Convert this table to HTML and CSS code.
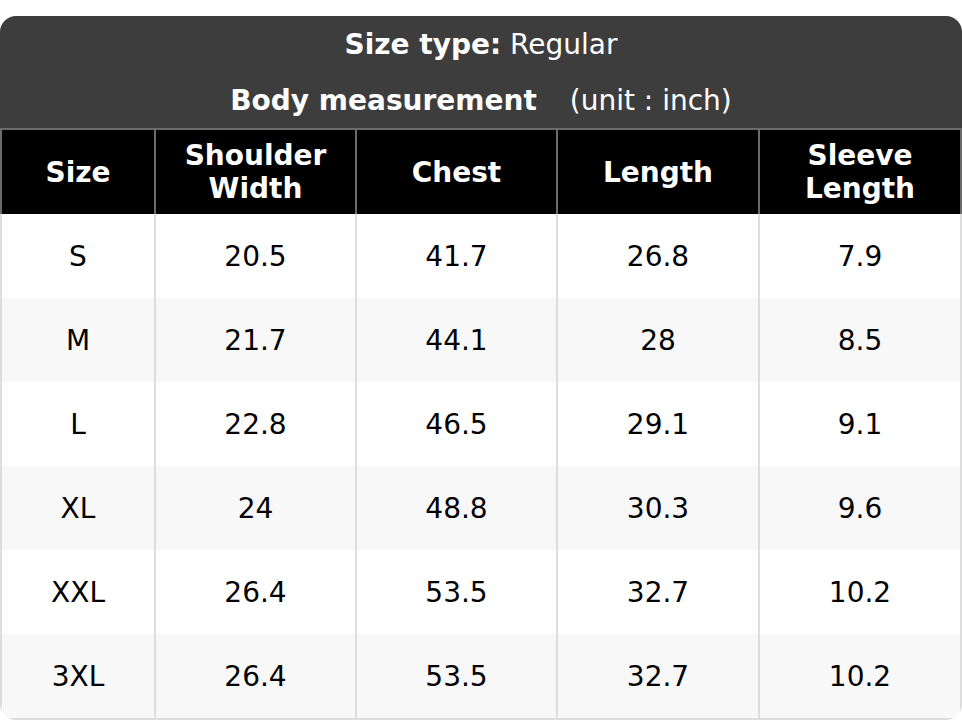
FILE: index.html
```html
<!DOCTYPE html>
<html>
<head>
<meta charset="utf-8">
<link rel="stylesheet" href="styles.css">
</head>
<body>
<div class="chart">
  <div class="title">
    <div class="title-line"><b>Size type:</b>&nbsp;Regular</div>
    <div class="title-line"><b>Body measurement</b><span class="unit">(unit : inch)</span></div>
  </div>
  <div class="grid">
    <div class="hcell">Size</div>
    <div class="hcell">Shoulder<br>Width</div>
    <div class="hcell">Chest</div>
    <div class="hcell">Length</div>
    <div class="hcell last">Sleeve<br>Length</div>

    <div class="cell">S</div><div class="cell">20.5</div><div class="cell">41.7</div><div class="cell">26.8</div><div class="cell last">7.9</div>
    <div class="cell alt">M</div><div class="cell alt">21.7</div><div class="cell alt">44.1</div><div class="cell alt">28</div><div class="cell alt last">8.5</div>
    <div class="cell">L</div><div class="cell">22.8</div><div class="cell">46.5</div><div class="cell">29.1</div><div class="cell last">9.1</div>
    <div class="cell alt">XL</div><div class="cell alt">24</div><div class="cell alt">48.8</div><div class="cell alt">30.3</div><div class="cell alt last">9.6</div>
    <div class="cell">XXL</div><div class="cell">26.4</div><div class="cell">53.5</div><div class="cell">32.7</div><div class="cell last">10.2</div>
    <div class="cell alt bottom">3XL</div><div class="cell alt bottom">26.4</div><div class="cell alt bottom">53.5</div><div class="cell alt bottom">32.7</div><div class="cell alt bottom last">10.2</div>
  </div>
</div>
</body>
</html>
```
FILE: styles.css
```css
html, body {
  margin: 0;
  padding: 0;
  background: #ffffff;
}
body {
  padding-top: 16px;
}
.chart {
  width: 962px;
  border-radius: 16px;
  overflow: hidden;
  font-family: "DejaVu Sans", sans-serif;
  font-size: 28px;
}
.title {
  background: #3d3d3d;
  color: #ffffff;
}
.title-line {
  height: 56px;
  display: flex;
  align-items: center;
  justify-content: center;
  white-space: pre;
}
.unit {
  margin-left: 33px;
}
.grid {
  display: grid;
  grid-template-columns: 154px 201px 201px 202px 204px;
}
.hcell {
  box-sizing: border-box;
  height: 86px;
  background: #000000;
  color: #ffffff;
  font-weight: bold;
  border-top: 2px solid #6b6b6b;
  border-left: 2px solid #6b6b6b;
  display: flex;
  align-items: center;
  justify-content: center;
  text-align: center;
  line-height: 33px;
}
.hcell.last {
  border-right: 2px solid #6b6b6b;
}
.cell {
  box-sizing: border-box;
  height: 84px;
  background: #ffffff;
  color: #000000;
  border-left: 2px solid #dddddd;
  display: flex;
  align-items: center;
  justify-content: center;
}
.cell.alt {
  background: #f8f8f8;
}
.cell.last {
  border-right: 2px solid #dddddd;
}
.cell.bottom {
  height: 86px;
  border-bottom: 2px solid #dddddd;
}
```
